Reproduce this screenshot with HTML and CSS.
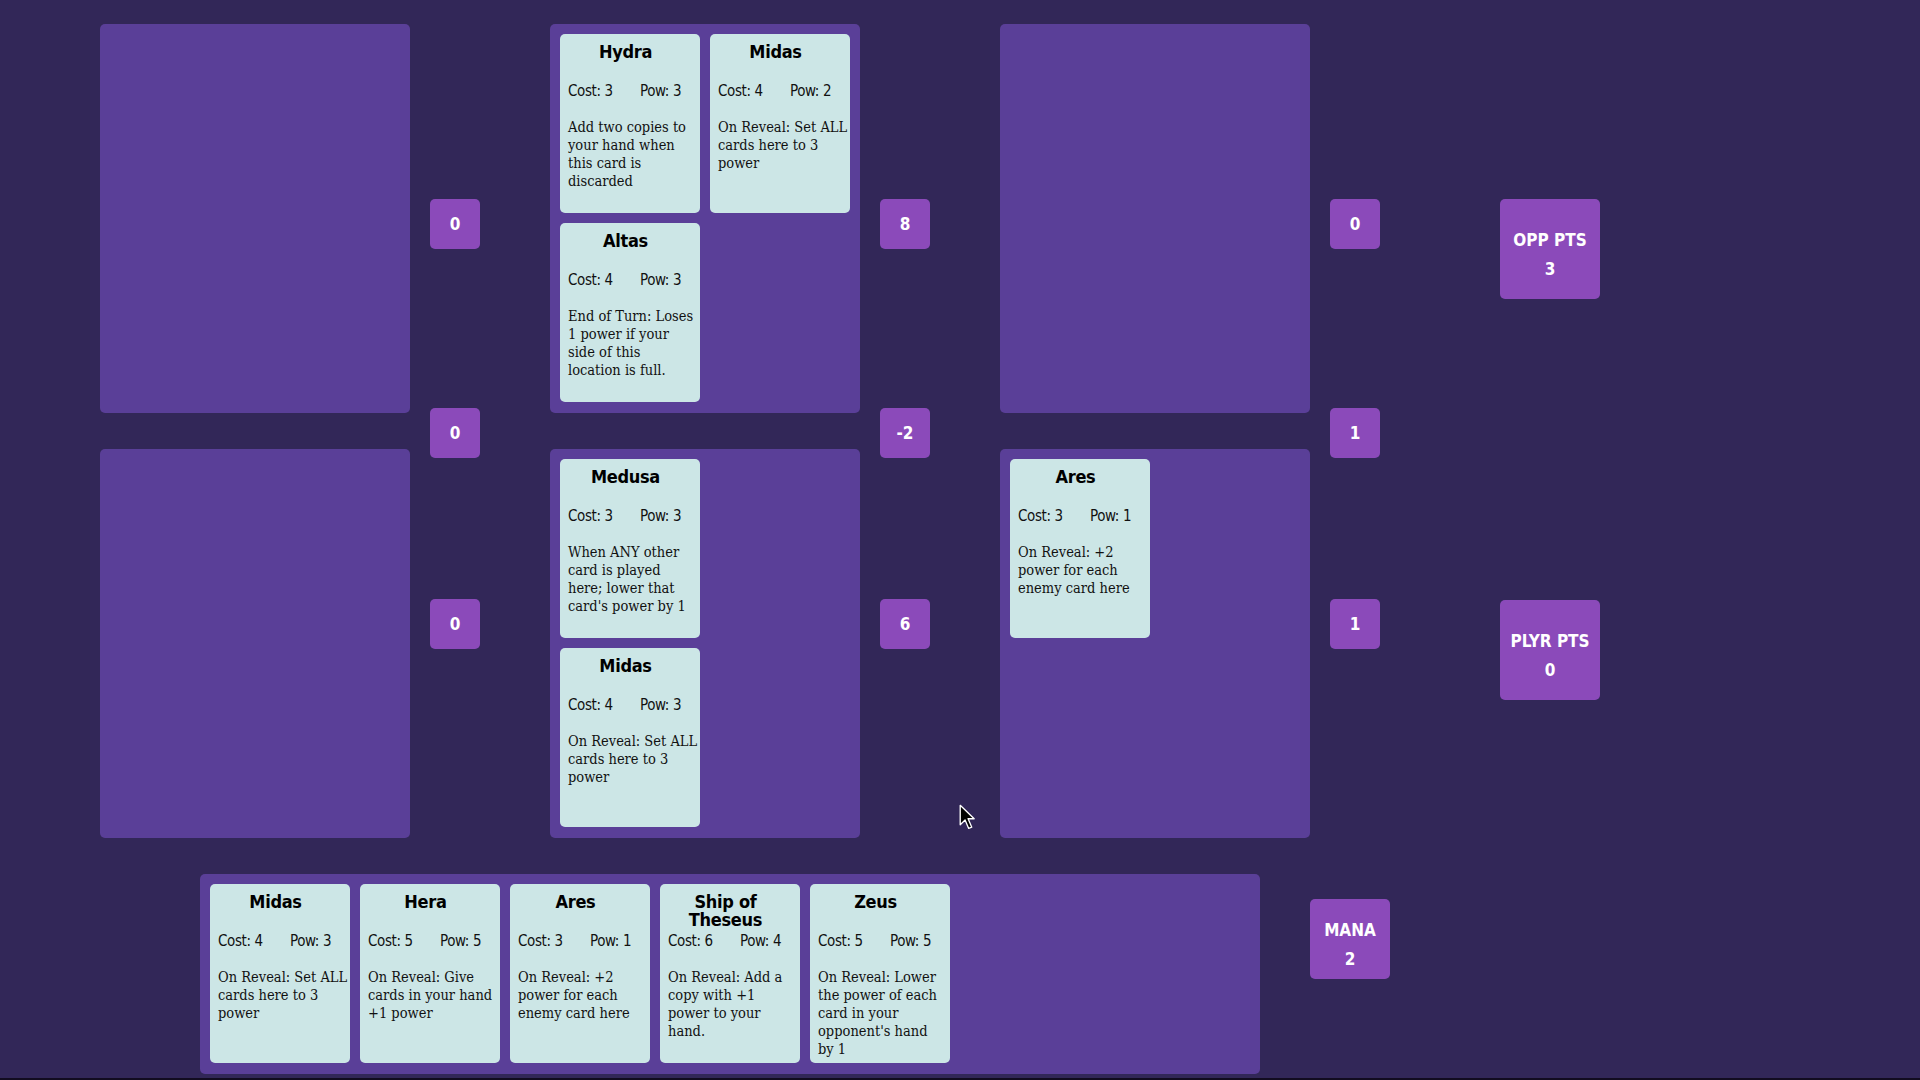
FILE: index.html
```html
<!DOCTYPE html>
<html lang="en">
<head>
  <meta charset="UTF-8">
  <title>Card Battle</title>
  <link rel="stylesheet" href="styles.css">
</head>
<body>
  <div class="board">
    <!-- lane 1 -->
    <div class="lane">
      <div class="lane-locations">
        <div class="location"></div>
        <div class="location"></div>
      </div>
      <div class="badge-col">
        <div class="badge">0</div>
        <div class="badge">0</div>
        <div class="badge">0</div>
      </div>
    </div>

    <!-- lane 2 -->
    <div class="lane">
      <div class="lane-locations">
        <div class="location">
          <div class="card">
            <div class="card-title">Hydra</div>
            <div class="card-stats"><span class="cost">Cost: 3</span><span>Pow: 3</span></div>
            <div class="card-desc">Add two copies to your hand when this card is discarded</div>
          </div>
          <div class="card">
            <div class="card-title">Midas</div>
            <div class="card-stats"><span class="cost">Cost: 4</span><span>Pow: 2</span></div>
            <div class="card-desc">On Reveal: Set ALL cards here to 3 power</div>
          </div>
          <div class="card">
            <div class="card-title">Altas</div>
            <div class="card-stats"><span class="cost">Cost: 4</span><span>Pow: 3</span></div>
            <div class="card-desc">End of Turn: Loses 1 power if your side of this<br>location is full.</div>
          </div>
        </div>
        <div class="location">
          <div class="card">
            <div class="card-title">Medusa</div>
            <div class="card-stats"><span class="cost">Cost: 3</span><span>Pow: 3</span></div>
            <div class="card-desc">When ANY other card is played here; lower that card's power by 1</div>
          </div>
          <div class="card break">
            <div class="card-title">Midas</div>
            <div class="card-stats"><span class="cost">Cost: 4</span><span>Pow: 3</span></div>
            <div class="card-desc">On Reveal: Set ALL cards here to 3 power</div>
          </div>
        </div>
      </div>
      <div class="badge-col">
        <div class="badge">8</div>
        <div class="badge">-2</div>
        <div class="badge">6</div>
      </div>
    </div>

    <!-- lane 3 -->
    <div class="lane">
      <div class="lane-locations">
        <div class="location"></div>
        <div class="location">
          <div class="card">
            <div class="card-title">Ares</div>
            <div class="card-stats"><span class="cost">Cost: 3</span><span>Pow: 1</span></div>
            <div class="card-desc">On Reveal: +2 power for each enemy card here</div>
          </div>
        </div>
      </div>
      <div class="badge-col">
        <div class="badge">0</div>
        <div class="badge">1</div>
        <div class="badge">1</div>
      </div>
    </div>

    <div class="pts-col">
      <div class="pts-box">OPP PTS<br>3</div>
      <div class="pts-box">PLYR PTS<br>0</div>
    </div>
  </div>

  <div class="hand-row">
    <div class="hand">
      <div class="card">
        <div class="card-title">Midas</div>
        <div class="card-stats"><span class="cost">Cost: 4</span><span>Pow: 3</span></div>
        <div class="card-desc">On Reveal: Set ALL cards here to 3 power</div>
      </div>
      <div class="card">
        <div class="card-title">Hera</div>
        <div class="card-stats"><span class="cost">Cost: 5</span><span>Pow: 5</span></div>
        <div class="card-desc">On Reveal: Give cards in your hand +1 power</div>
      </div>
      <div class="card">
        <div class="card-title">Ares</div>
        <div class="card-stats"><span class="cost">Cost: 3</span><span>Pow: 1</span></div>
        <div class="card-desc">On Reveal: +2 power for each enemy card here</div>
      </div>
      <div class="card">
        <div class="card-title">Ship of Theseus</div>
        <div class="card-stats"><span class="cost">Cost: 6</span><span>Pow: 4</span></div>
        <div class="card-desc">On Reveal: Add a copy with +1 power to your hand.</div>
      </div>
      <div class="card">
        <div class="card-title">Zeus</div>
        <div class="card-stats"><span class="cost">Cost: 5</span><span>Pow: 5</span></div>
        <div class="card-desc">On Reveal: Lower the power of each card in your opponent's hand<br>by 1</div>
      </div>
    </div>
    <div class="mana-box">MANA<br>2</div>
  </div>

  <svg class="pointer" width="17" height="27" viewBox="0 0 14 22">
    <path d="M1 1 L1 17 L5 13 L8 20 L10.5 19 L7.5 12 L12.5 12 Z" fill="#000" stroke="#fff" stroke-width="1.1" stroke-linejoin="round"/>
  </svg>
</body>
</html>
```

FILE: styles.css
```css
body {
  margin: 0;
  height: 1080px;
  overflow: hidden;
  background-color: #322758;
  border-bottom: 2px solid #120c20;
  box-sizing: border-box;
  font-family: 'DejaVu Sans Condensed', 'DejaVu Sans', sans-serif;
  position: relative;
}

.board {
  display: flex;
  align-items: flex-start;
  gap: 70px;
  padding: 24px 0 0 100px;
}

.lane {
  display: flex;
  gap: 20px;
}

.lane-locations {
  display: flex;
  flex-direction: column;
  gap: 36px;
}

.location {
  width: 310px;
  height: 389px;
  background-color: #5a3f98;
  border-radius: 5px;
  padding: 10px;
  box-sizing: border-box;
  display: flex;
  flex-wrap: wrap;
  align-content: flex-start;
  gap: 10px;
}

/* second card of the bottom middle slot sits under the first */
.location .card.break {
  margin-right: 150px;
}

.badge-col {
  display: flex;
  flex-direction: column;
}

.badge {
  width: 50px;
  height: 50px;
  background-color: #8b4aba;
  border-radius: 5px;
  color: white;
  font-weight: bold;
  font-size: 17px;
  display: flex;
  justify-content: center;
  align-items: center;
}

.badge:nth-child(1) { margin-top: 175px; }
.badge:nth-child(2) { margin-top: 159px; }
.badge:nth-child(3) { margin-top: 141px; }

.pts-col {
  margin-left: 50px;
  display: flex;
  flex-direction: column;
  gap: 301px;
  padding-top: 175px;
}

.pts-box,
.mana-box {
  background-color: #8b4aba;
  border-radius: 5px;
  color: white;
  font-weight: bold;
  font-size: 17px;
  line-height: 29px;
  text-align: center;
  box-sizing: border-box;
}

.pts-box {
  width: 100px;
  height: 100px;
  padding-top: 27px;
}

.card {
  width: 140px;
  height: 179px;
  background-color: #cce6e6;
  border-radius: 5px;
  padding: 9px 2px 0 8px;
  box-sizing: border-box;
  color: #111;
  flex-shrink: 0;
}

.card-title {
  height: 39px;
  padding-right: 15px;
  text-align: center;
  font-weight: bold;
  font-size: 18px;
  line-height: 18px;
  letter-spacing: -0.3px;
  color: #000;
}

.card-stats {
  display: flex;
  font-size: 15px;
  line-height: 18px;
  letter-spacing: -0.4px;
}

.card-stats .cost {
  width: 72px;
}

.card-desc {
  margin-top: 18px;
  font-family: 'DejaVu Serif Condensed', 'DejaVu Serif', serif;
  font-size: 14.5px;
  line-height: 18px;
}

.hand-row {
  display: flex;
  align-items: flex-start;
  gap: 50px;
  margin: 36px 0 0 200px;
}

.hand {
  width: 1060px;
  height: 200px;
  background-color: #5a3f98;
  border-radius: 5px;
  padding: 10px;
  box-sizing: border-box;
  display: flex;
  gap: 10px;
}

.mana-box {
  width: 80px;
  height: 80px;
  margin-top: 25px;
  padding-top: 17px;
}

.pointer {
  position: absolute;
  left: 959px;
  top: 804px;
}
```
